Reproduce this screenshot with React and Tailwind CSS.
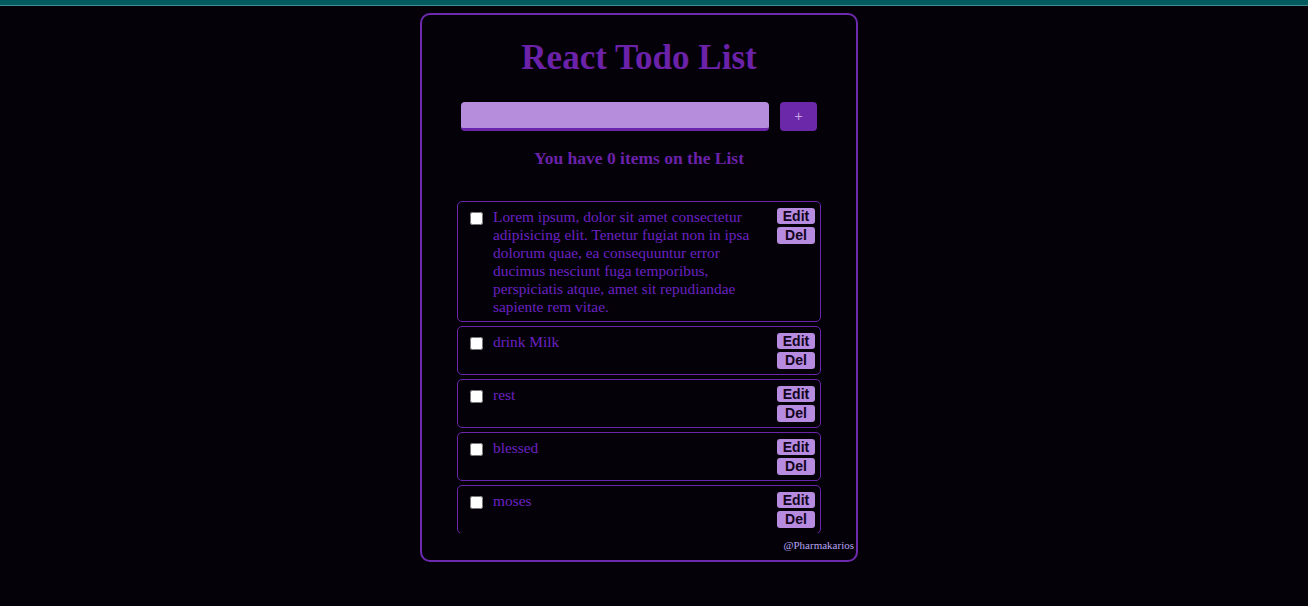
import { useState } from 'react';

const startItems = [
  {
    id: 1,
    text: 'Lorem ipsum, dolor sit amet consectetur adipisicing elit. Tenetur fugiat non in ipsa dolorum quae, ea consequuntur error ducimus nesciunt fuga temporibus, perspiciatis atque, amet sit repudiandae sapiente rem vitae.',
  },
  { id: 2, text: 'drink Milk' },
  { id: 3, text: 'rest' },
  { id: 4, text: 'blessed' },
  { id: 5, text: 'moses' },
];

function TodoItem({ item }) {
  return (
    <li className="flex items-start border border-[#6b24ac] rounded-[5px] pl-[12px] pr-[5px] py-[5px] mb-[4px]">
      <input type="checkbox" className="w-[13px] h-[13px] mt-[5px] shrink-0" />
      <p className="flex-1 ml-[10px] mr-[10px] mt-[1px] text-[15.4px] leading-[18px] text-[#6a22c2] font-['Liberation_Serif',serif]">
        {item.text}
      </p>
      <div className="flex flex-col gap-[3px] mt-[1px] shrink-0">
        <button className="w-[38px] h-[16px] bg-[#b78bdf] rounded-[3px] text-[14px] leading-[16px] font-bold text-[#12041c] font-['Liberation_Sans',sans-serif]">
          Edit
        </button>
        <button className="w-[38px] h-[17px] bg-[#b78bdf] rounded-[3px] text-[14px] leading-[17px] font-bold text-[#12041c] font-['Liberation_Sans',sans-serif]">
          Del
        </button>
      </div>
    </li>
  );
}

export default function App() {
  const [value, setValue] = useState('');
  const [items] = useState(startItems);

  return (
    <div className="min-h-[606px] bg-[#050109] font-['Liberation_Serif',serif]">
      <div className="h-[6px] bg-[#035b60] border-b border-[#3f8d8f]"></div>
      <div className="mt-[7px] ml-[420px] w-[438px] h-[549px] border-2 border-[#6d2aae] rounded-[10px] flex flex-col">
        <h1 className="pt-[23px] text-center text-[35px] leading-[40px] font-bold text-[#6b22a9]">
          React Todo List
        </h1>
        <div className="mt-[24px] px-[39px] flex gap-[11px]">
          <input
            value={value}
            onChange={(e) => setValue(e.target.value)}
            className="flex-1 h-[29px] bg-[#b68ddc] rounded-[4px] border-b-[3px] border-[#6c24ab] outline-none px-2"
          />
          <button className="w-[37px] h-[29px] bg-[#6b28a8] rounded-[4px] text-[#c9a6e6] text-[14px] font-['Liberation_Sans',sans-serif]">
            +
          </button>
        </div>
        <h3 className="mt-[17px] text-center text-[17.5px] leading-[21px] font-bold text-[#6b22a9]">
          You have 0 items on the List
        </h3>
        <ul className="mt-[32px] mx-[35px] h-[332px] overflow-hidden">
          {items.map((item) => (
            <TodoItem key={item.id} item={item} />
          ))}
        </ul>
        <p className="mt-[6px] pr-[2px] text-right text-[11px] leading-[13px] text-[#b5a6f2]">
          @Pharmakarios
        </p>
      </div>
    </div>
  );
}
